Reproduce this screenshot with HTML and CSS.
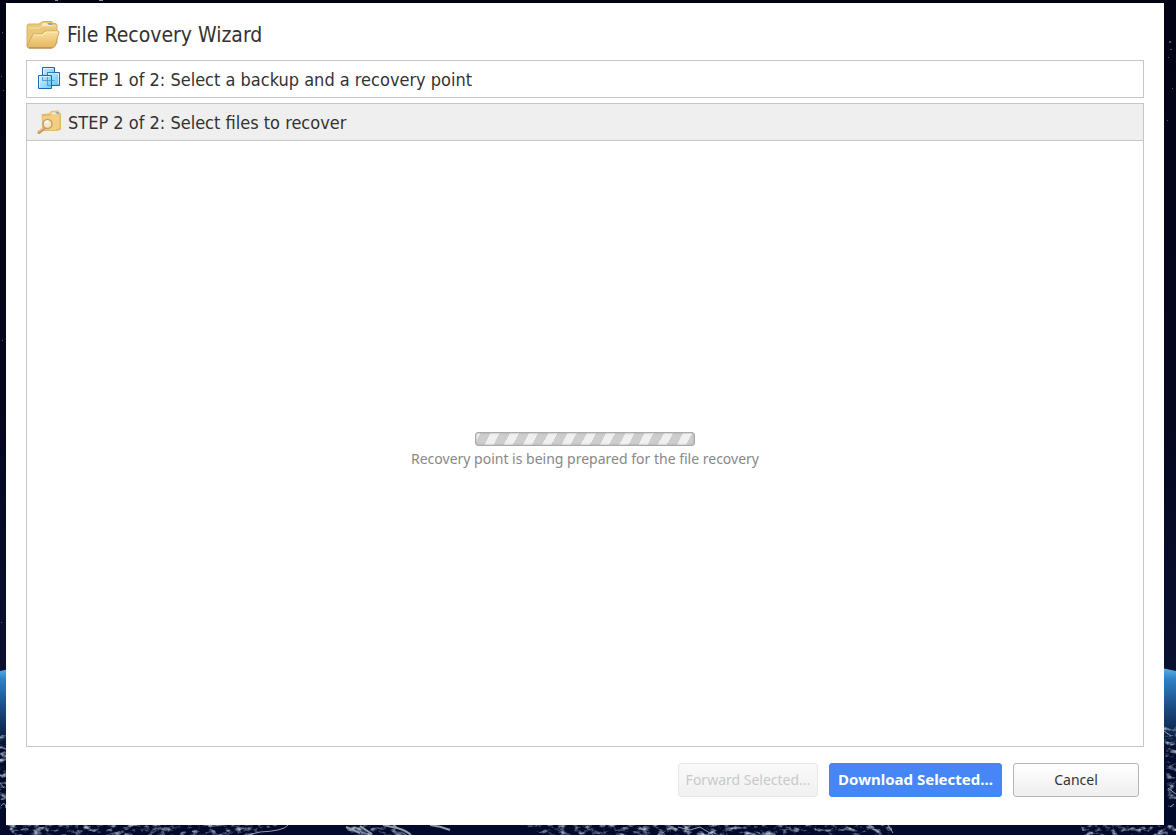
FILE: index.html
```
<!DOCTYPE html>
<html lang="en">
<head>
  <meta charset="UTF-8">
  <meta name="viewport" content="width=device-width, initial-scale=1.0">
  <title>File Recovery Wizard</title>
  <link rel="stylesheet" href="styles.css">
</head>
<body>
  <svg class="wallpaper" viewBox="0 0 1176 835" preserveAspectRatio="none" aria-hidden="true">
    <defs>
      <linearGradient id="sky" x1="0" y1="0" x2="0" y2="1">
        <stop offset="0" stop-color="#020314"/>
        <stop offset=".5" stop-color="#05071f"/>
        <stop offset=".8" stop-color="#0a1030"/>
      </linearGradient>
      <linearGradient id="earth" gradientUnits="userSpaceOnUse" x1="0" y1="667" x2="0" y2="750">
        <stop offset="0" stop-color="#5db4ea"/>
        <stop offset=".15" stop-color="#2f80c4"/>
        <stop offset=".5" stop-color="#1c4a7e"/>
        <stop offset="1" stop-color="#020a2c"/>
      </linearGradient>
      <filter id="clouds" x="0" y="0" width="1" height="1">
        <feTurbulence type="fractalNoise" baseFrequency=".12 .22" numOctaves="4" seed="8"/>
        <feColorMatrix values="0 0 0 0 .4  0 0 0 0 .5  0 0 0 0 .58  3 0 0 0 -1.450"/>
        <feComposite in2="SourceAlpha" operator="in"/>
      </filter>
    </defs>
    <rect width="1176" height="835" fill="url(#sky)"/>
    <path d="M0 671 Q588 540 1176 671 V835 H0z" fill="url(#earth)"/>
    <g fill="#c8cde0">
      <path d="M55 0h3v1h-3zM99 0h4v1h-4z" opacity=".7"/>
      <path d="M1169 41h2v2h-2zM1170 49h2v1h-2zM1168 57h1v1h-1zM1172 88h1v1h-1zM1167 120h1v1h-1z" opacity=".4"/>
      <path d="M2 32h1v1H2zM1 76h1v1H1zM3 90h1v1H3zM2 340h1v1H2zM1 622h1v1H1z" opacity=".4"/>
    </g>
    <g filter="url(#clouds)">
      <path d="M0 735h6v75H0zM6 825h275l-30 10H14zM345 825h50l12 10H350zM522 825h370v10H545zM1080 825h96v10h-92zM1164 725h12v82h-8z"/>
    </g>
    <g fill="none" stroke="#8f9eac">
      <path d="M288 825q-4 6-28 7l-12 3"/>
      <path d="M346 827l14 6M360 826l12 8M383 825l14 3q10 3 14 7M430 825q10 1 20 5" stroke-width="2"/>
      <path d="M678 827l12 3 10-3 13 8M888 825l5 8M0 783l4 5M1 806q4-6 5 2M1164 731l7 5M1168 788l8 6M1170 807l4-3"/>
    </g>
  </svg>

  <main class="wizard">
    <h1 class="wizard-title">
      <svg class="title-icon" viewBox="0 0 34 28" aria-hidden="true">
        <defs>
          <linearGradient id="folder" x1="0" y1="0" x2="0" y2="1">
            <stop offset="0" stop-color="#fae3a4"/>
            <stop offset="1" stop-color="#e4b45c"/>
          </linearGradient>
        </defs>
        <path d="M1 25V5q0-2 2-2h10l2-1.500q1-1 3-1h7q2 0 2 2h2q2 0 2 2V22L28 26H3z" fill="#e9c77b" stroke="#d6b16a"/>
        <path d="M16 3q1-1 2-1h8v3H16z" fill="#f5ebc9"/>
        <path d="M21 2h5v2h-3z" fill="#73adc9"/>
        <path d="M2 7H14l2-2h14" fill="none" stroke="#f8e1a4"/>
        <path d="M7 13h9l3-3h13q1 0 1 1l-4 14q-1 2-3 2H3q-2 0-2-2z" fill="url(#folder)" stroke="#cfa65b"/>
        <path d="M7 14h10l3-3h12" fill="none" stroke="#fff0c4"/>
        <path d="M3 27h23" stroke="#a78250"/>
      </svg>
      File Recovery Wizard
    </h1>

    <section class="step">
      <h2 class="step-title">
        <svg class="step-icon" viewBox="0 0 24 24" aria-hidden="true">
          <defs>
            <linearGradient id="glass" x1="0" y1="0" x2="1" y2="1">
              <stop offset="0" stop-color="#d2f0ff"/>
              <stop offset="1" stop-color="#57c2f7"/>
            </linearGradient>
          </defs>
          <g fill="url(#glass)" stroke="#1c68b3">
            <path d="M5.500 .5h12v13h-12z"/>
            <path d="M10.500 5.500h12v13h-12z"/>
            <path d="M1.500 8.500h13v13h-13z" fill-opacity=".85"/>
          </g>
          <path d="M5.500 8v5.500h12M10.500 9v9.500h3M10.500 8V5.500h7" fill="none" stroke="#378ecc" opacity=".7"/>
          <path d="M2.500 20V9.500H13M6.500 7V1.500H16M18 6.500h3.500V17" fill="none" stroke="#e4f7ff" opacity=".8"/>
        </svg>
        STEP 1 of 2: Select a backup and a recovery point
      </h2>
    </section>

    <section class="step step-active">
      <h2 class="step-title">
        <svg class="step-icon" viewBox="0 0 24 24" aria-hidden="true">
          <path d="M5 4.500l7-.5 2-2.500 7-.5 1 2 2 .5-.5 16L19 20.500H6z" fill="#f3cf83" stroke="#e2bc72"/>
          <path d="M14 3l6-1v2l-6 .5z" fill="#f8ecc8"/>
          <path d="M18 2l4 .5-1 2z" fill="#67a4c2"/>
          <path d="M6 5.500l7-.5 2-1M23 4v15l-4 1" fill="none" stroke="#e4b258"/>
          <path d="M7.500 18L2 22.500" stroke="#d39450" stroke-width="3" stroke-linecap="round"/>
          <path d="M6.500 18L2 21.500" stroke="#f8d3a2" stroke-linecap="round"/>
          <circle cx="10.500" cy="14" r="4.500" fill="#f8e9c0" stroke="#c39d6b" stroke-width="1.500"/>
          <path d="M8 13q1-2 3.500-2" fill="none" stroke="#fff" stroke-width="1.500"/>
        </svg>
        STEP 2 of 2: Select files to recover
      </h2>
      <div class="step-content">
        <progress class="loader" id="loader"></progress>
        <label class="loader-text" for="loader">Recovery point is being prepared for the file recovery</label>
      </div>
    </section>

    <div class="buttons">
      <button class="btn btn-forward" type="button" disabled>Forward Selected...</button>
      <button class="btn btn-primary" type="button">Download Selected...</button>
      <button class="btn btn-cancel" type="button">Cancel</button>
    </div>
  </main>
</body>
</html>
```
FILE: styles.css
```
* {
  box-sizing: border-box;
}

body {
  display: flex;
  min-height: 100vh;
  margin: 0;
  padding: 3px 12px 10px 6px;
  background-color: #030418;
  color: #333;
  font-family: Tahoma, "Noto Sans", sans-serif;
}

/* space picture behind the wizard */
.wallpaper {
  position: fixed;
  top: 0;
  left: 0;
  z-index: -1;
  width: 100%;
  height: 100%;
}

.wizard {
  display: flex;
  flex: 1;
  flex-direction: column;
  padding: 17px 20px 28px;
  background-color: #fff;
}

.wizard-title,
.step-title {
  display: flex;
  align-items: center;
  gap: 7px;
  font-family: Tahoma, "DejaVu Sans Condensed", sans-serif;
  font-weight: normal;
}

.wizard-title {
  height: 30px;
  margin: 0 0 10px;
  font-size: 21px;
}

.title-icon {
  width: 34px;
  height: 28px;
}

.step {
  border: 1px solid #c6c6c6;
}

.step-title {
  height: 36px;
  margin: 0;
  padding: 0 10px;
  font-size: 18px;
}

.step-icon {
  width: 24px;
  height: 24px;
}

.step-active {
  display: flex;
  flex: 1;
  flex-direction: column;
  margin-top: 5px;
}

.step-active .step-title {
  height: 37px;
  border-bottom: 1px solid #c6c6c6;
  background-color: #efefef;
}

.step-content {
  display: flex;
  flex: 1;
  flex-direction: column;
  align-items: center;
  justify-content: center;
  gap: 3px;
  padding-top: 14px;
}

.loader {
  width: 220px;
  height: 14px;
  border: 1px solid #aaa;
  border-radius: 3px;
  background: repeating-linear-gradient(118deg, #f0f0f0 0, #f0f0f0 4px, #cdcdcd 4px, #cdcdcd 13px, #f0f0f0 13px, #f0f0f0 17px);
  box-shadow: inset 0 0 2px #999;
  appearance: none;
}

.loader::-webkit-progress-bar {
  background: transparent;
}

.loader-text {
  color: #888;
  font-size: 14px;
  line-height: 20px;
}

.buttons {
  display: flex;
  justify-content: flex-end;
  gap: 11px;
  margin-top: 16px;
  padding-right: 5px;
}

.btn {
  height: 34px;
  padding: 0 0 2px;
  border: 1px solid #b5b5b5;
  border-radius: 3px;
  background: linear-gradient(#fff, #eee);
  color: #333;
  font-family: inherit;
  font-size: 14px;
  white-space: nowrap;
}

.btn-forward {
  width: 140px;
  border-color: #e8e8e8;
  background: linear-gradient(#f9f9f9, #f1f1f1);
  color: #c9c9c9;
}

.btn-primary {
  width: 173px;
  border-color: #4285f4;
  background: #4686f7;
  color: #fff;
  font-size: 15px;
  font-weight: bold;
}

.btn-cancel {
  width: 126px;
}
```
